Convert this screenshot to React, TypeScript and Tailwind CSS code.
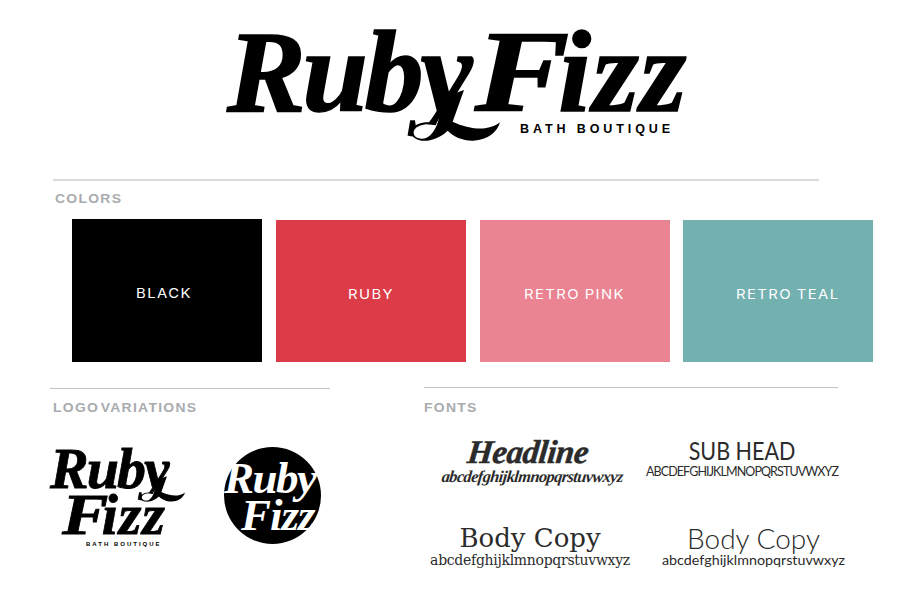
import React from "react";

const swatches = [
  { name: "BLACK", bg: "bg-black", box: "ml-[72px] h-[143px]", label: "ml-[64px]" },
  { name: "RUBY", bg: "bg-[#dc3c48]", box: "ml-[14px] mt-px h-[142px]", label: "ml-[72px]" },
  { name: "RETRO PINK", bg: "bg-[#ea8493]", box: "ml-[14px] mt-px h-[142px]", label: "ml-[44px]" },
  { name: "RETRO TEAL", bg: "bg-[#73b0b0]", box: "ml-[13px] mt-px h-[142px]", label: "ml-[53px]" },
];

const labelClass =
  "font-['Liberation_Sans',sans-serif] font-bold text-[12px] leading-[14px] tracking-[1.1px] [word-spacing:-3px] text-[#a9abae] origin-left scale-x-[1.16] whitespace-nowrap";

const logoText =
  "font-['Liberation_Serif',serif] font-bold italic whitespace-nowrap origin-left";

// tail of the y, traced from the logo
const Swash = ({ className }: { className: string }) => (
  <svg viewBox="0 0 330 165" className={className} fill="black">
    <path
      fill="white"
      d="M106 106 C80 98 52 105 42 120 C35 135 48 147 68 146 C90 146 108 120 118 85 Z"
    />
    <path d="M135 20 L192 0 L158 95 C190 110 225 118 255 115 C275 112 290 105 300 97 C292 125 265 150 220 152 C190 153 160 140 143 122 C125 140 95 155 65 152 C40 150 28 130 38 115 C48 100 75 92 110 100 L106 106 C80 98 52 105 42 120 C35 135 48 147 68 146 C90 146 108 120 118 85 Z" />
  </svg>
);

const App = () => {
  return (
    <div className="w-[920px] h-[600px] bg-white overflow-hidden font-['Liberation_Sans',sans-serif]">
      {/* main logo */}
      <div className="h-[179px] pl-[227px] pt-[13px]">
        <div className="relative w-[460px] h-[130px]">
          <div
            className={`${logoText} text-black text-[116px] leading-[118px] tracking-[-3.5px] [word-spacing:-20px] scale-x-[1.02] [-webkit-text-stroke:1.5px_black]`}
          >
            Ruby{" "}
            <span className="inline-block origin-left scale-x-[1.2] mr-[8px]">F</span>
            <span className="tracking-[1.5px]">izz</span>
          </div>
          <Swash className="absolute left-[173px] top-[77px] w-[110px] h-[55px]" />
          <div className="absolute left-[293px] top-[109px] text-[12.5px] leading-[14px] font-bold tracking-[3.9px] text-black whitespace-nowrap">
            BATH BOUTIQUE
          </div>
        </div>
      </div>

      {/* colors */}
      <div className="ml-[53px] w-[766px] h-[2px] bg-[#dadada]" />
      <div className={`${labelClass} ml-[55px] mt-[11px]`}>COLORS</div>
      <div className="flex mt-[13px]">
        {swatches.map((s) => (
          <div key={s.name} className={`w-[190px] ${s.bg} ${s.box} flex items-center`}>
            <span
              className={`${s.label} font-['Inter',sans-serif] font-normal text-[13.5px] tracking-[1.3px] [word-spacing:-1px] text-white whitespace-nowrap mt-[6px] origin-left scale-x-[1.1]`}
            >
              {s.name}
            </span>
          </div>
        ))}
      </div>

      <div className="flex mt-[25px]">
        {/* logo variations */}
        <div className="ml-[50px] w-[280px] pt-px">
          <div className="h-px bg-[#c4c4c4]" />
          <div className={`${labelClass} ml-[3px] mt-[12px]`}>LOGO VARIATIONS</div>
          <div className="flex mt-[30px]">
            <div className="relative w-[136px] h-[110px]">
              <div className={`${logoText} text-black text-[58px] leading-[48px] tracking-[-2px] [-webkit-text-stroke:0.8px_black]`}>
                Ruby
              </div>
              <div className={`${logoText} text-black text-[58px] leading-[44px] tracking-[1px] ml-[12px] [-webkit-text-stroke:0.8px_black]`}>
                <span className="inline-block origin-left scale-x-[1.2] tracking-[-2px] mr-[3px]">F</span>
                izz
              </div>
              <Swash className="absolute left-[85px] top-[31px] w-[55px] h-[28px]" />
              <div className="text-[6px] leading-[8px] font-bold tracking-[2px] text-black ml-[36px] mt-[3px] whitespace-nowrap">
                BATH BOUTIQUE
              </div>
            </div>
            <div className="ml-[38px] mt-[2px] w-[97px] h-[97px] rounded-full bg-black">
              <div className={`${logoText} text-white text-[45px] leading-[40px] tracking-[-1.5px] mt-[11px]`}>
                Ruby
              </div>
              <div className={`${logoText} text-white text-[45px] leading-[34px] tracking-[-1px] ml-[17px]`}>
                Fizz
              </div>
            </div>
          </div>
        </div>

        {/* fonts */}
        <div className="ml-[94px] w-[414px]">
          <div className="h-px bg-[#c4c4c4]" />
          <div className={`${labelClass} mt-[13px]`}>FONTS</div>
          <div className="grid grid-cols-[222px_192px] mt-[17px] text-[#2b2b2b]">
            <div className="h-[86px] w-[199px] ml-[9px] flex flex-col items-center -skew-x-6">
              <div className="font-['Liberation_Serif',serif] font-bold italic text-[33px] leading-[36px] mt-[2px] mr-[14px] tracking-[-0.5px] [-webkit-text-stroke:0.5px_#2b2b2b]">
                Headline
              </div>
              <div className="font-['Liberation_Serif',serif] font-bold italic text-[16.5px] leading-[14px] tracking-[-0.65px] whitespace-nowrap">
                abcdefghijklmnopqrstuvwxyz
              </div>
            </div>
            <div className="h-[86px] flex flex-col items-center pt-[5px]">
              <div className="font-['Lato',sans-serif] text-[25px] leading-[27px] whitespace-nowrap scale-x-[0.86]">SUB HEAD</div>
              <div className="font-['Lato',sans-serif] text-[12.5px] leading-[16px] tracking-[-0.9px] whitespace-nowrap">
                ABCDEFGHIJKLMNOPQRSTUVWXYZ
              </div>
            </div>
            <div className="w-[212px] flex flex-col items-center pt-[5px]">
              <div className="font-['DejaVu_Serif',serif] text-[26px] leading-[30px] whitespace-nowrap">Body Copy</div>
              <div className="font-['DejaVu_Serif',serif] text-[14px] leading-[15px] tracking-[-0.3px] whitespace-nowrap">
                abcdefghijklmnopqrstuvwxyz
              </div>
            </div>
            <div className="flex flex-col items-center ml-[16px] w-[183px] pt-[5px]">
              <div className="font-['Lato',sans-serif] font-light text-[28px] leading-[30px] whitespace-nowrap">Body Copy</div>
              <div className="font-['Lato',sans-serif] text-[14.3px] leading-[13px] whitespace-nowrap">
                abcdefghijklmnopqrstuvwxyz
              </div>
            </div>
          </div>
        </div>
      </div>
    </div>
  );
};

export default App;
